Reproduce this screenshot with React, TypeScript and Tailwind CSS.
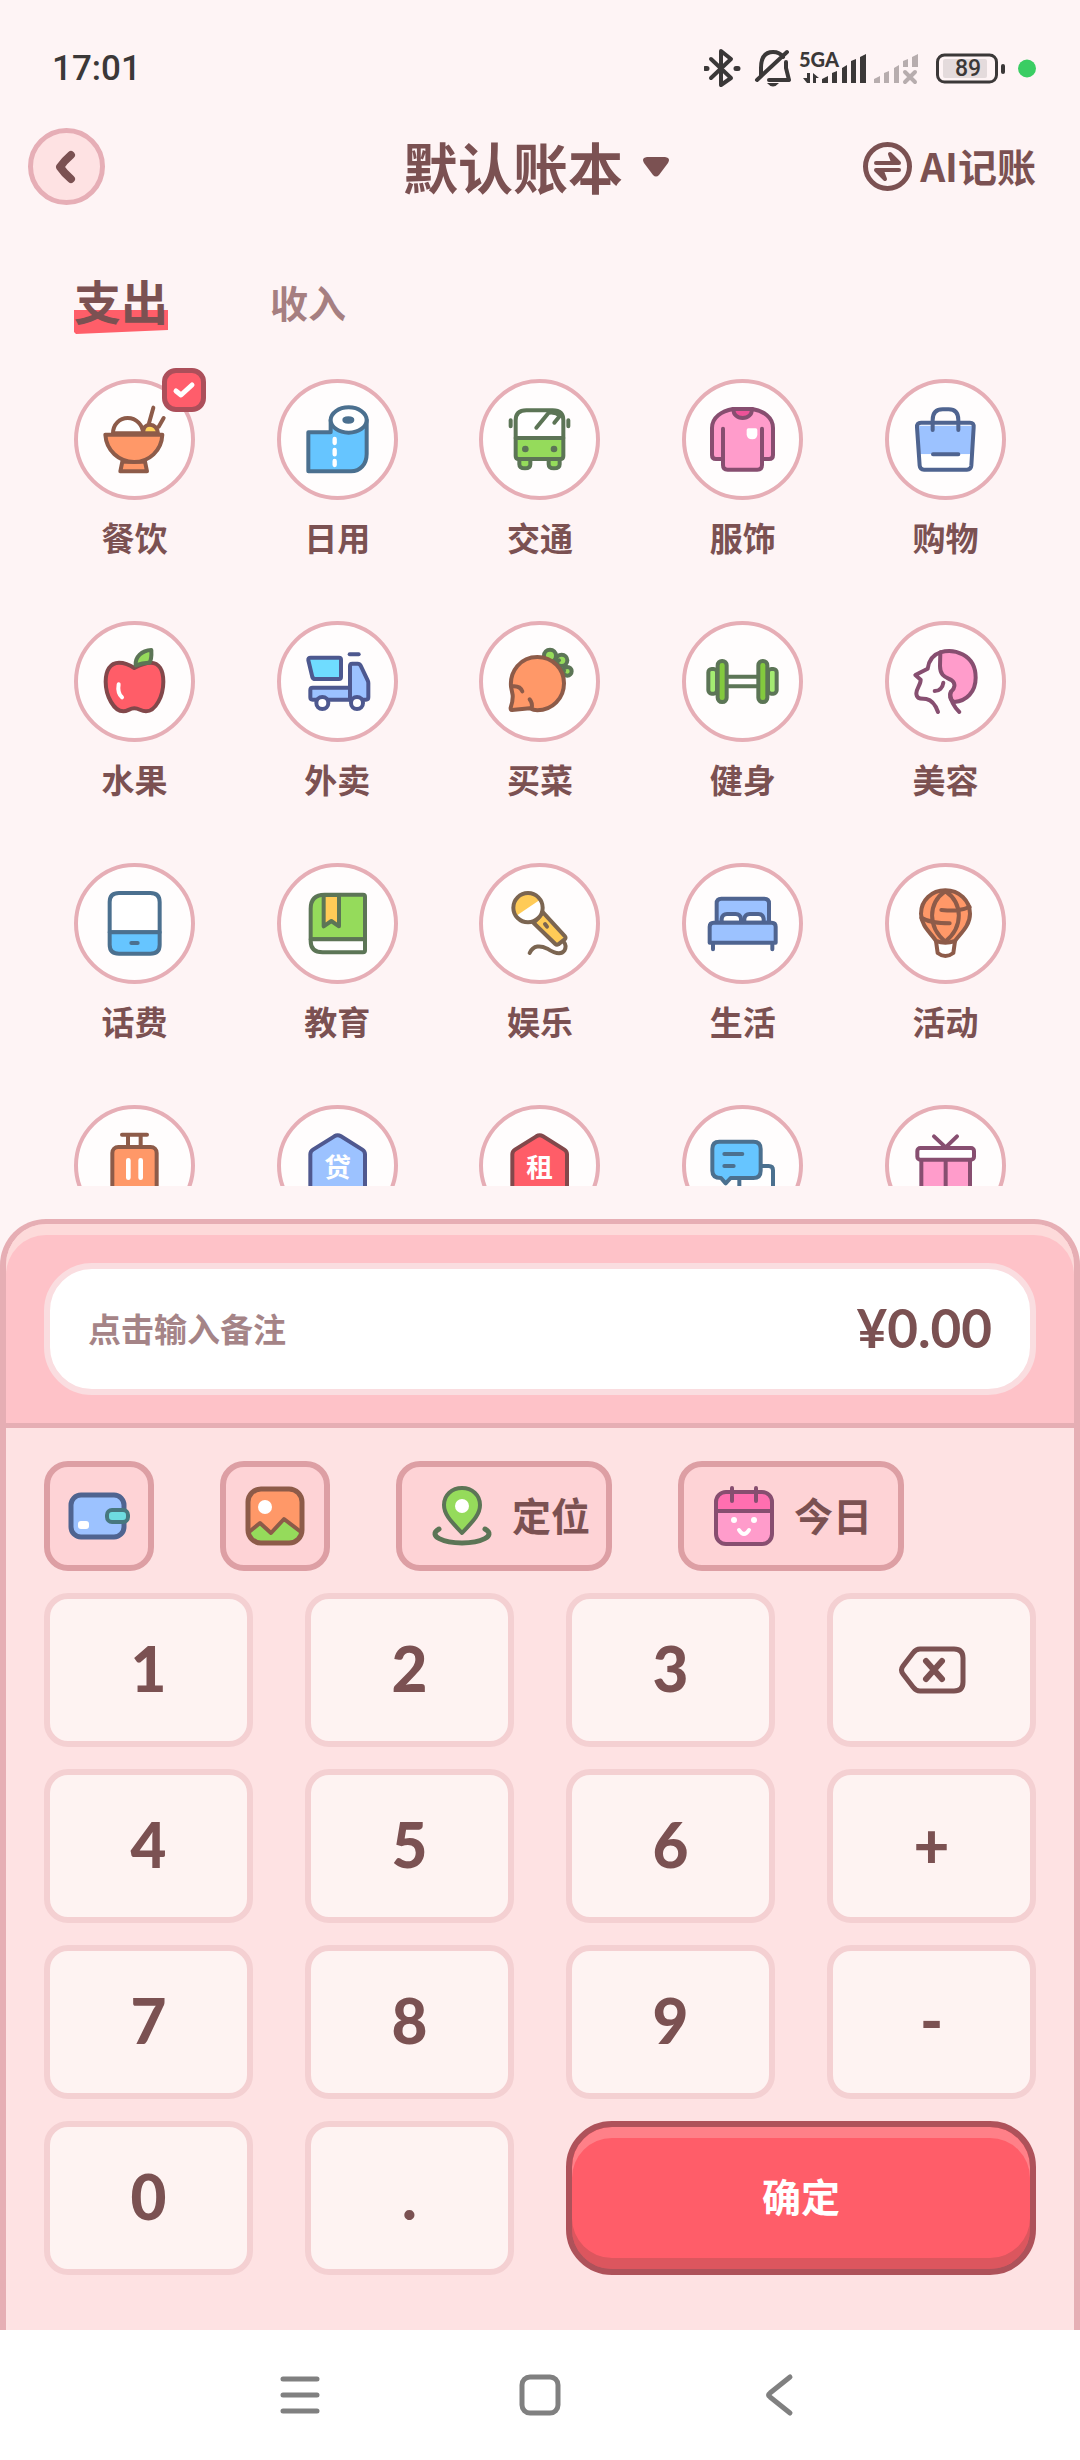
import { useState } from "react";
import type { ReactNode } from "react";

const ORANGE = "#ff9868";
const ORANGE_LINE = "#8d5b49";
const BLUE = "#9cc2ff";
const BLUE_LINE = "#4f6490";
const SKY = "#66c5ff";
const SKY_LINE = "#4b708f";
const GREEN = "#95db5b";
const GREEN_LINE = "#5c7556";
const PINK = "#ff9ccb";
const PINK_LINE = "#874e70";
const RED = "#ff5d68";
const RED_LINE = "#82484b";
const YELLOW = "#ffcb57";
const YELLOW_LINE = "#7b6551";

function Glyph({ line, children }: { line: string; children: ReactNode }) {
  return (
    <svg
      viewBox="12 12 339 339"
      className="size-full"
      fill="none"
      stroke={line}
      strokeWidth={12}
      strokeLinecap="round"
      strokeLinejoin="round"
      aria-hidden="true"
    >
      {children}
    </svg>
  );
}

const Bowl = () => (
  <Glyph line={ORANGE_LINE}>
    <path d="M208 163 C206 145 216 137 228 137 C241 137 251 148 252 163Z" fill="#ffd35c" />
    <path d="M117 163 C117 136 137 117 161 117 C187 117 207 138 207 163Z" fill="#fff" />
    <path d="M145 248 L139 277 H219 L213 248Z" fill={ORANGE} />
    <path d="M94 167 H265 C263 215 225 249 180 249 C135 249 97 215 94 167Z" fill={ORANGE} />
    <path d="M238 86 L225 133 M269 117 L254 143" />
  </Glyph>
);

const Tissue = () => (
  <Glyph line={SKY_LINE}>
    <path d="M161 123 V160 H94 V277 H222 C250 277 269 255 269 225 V123Z" fill={SKY} />
    <ellipse cx="215" cy="123" rx="54" ry="38" fill="#fff" />
    <ellipse cx="214" cy="123" rx="12" ry="5" fill={SKY_LINE} />
    <path d="M173 180 V192 M173 213 V226 M173 246 V258" stroke="#fff" strokeWidth={13} />
  </Glyph>
);

const Bus = () => (
  <Glyph line={GREEN_LINE}>
    <path d="M121 240 V256 Q121 268 138 268 Q154 268 154 256 V240Z" fill={GREEN} />
    <path d="M209 240 V256 Q209 268 225 268 Q242 268 242 256 V240Z" fill={GREEN} />
    <path d="M110 124 Q110 94 142 94 H221 Q253 94 253 124 V177 H110Z" fill="#fff" />
    <path d="M110 177 H253 V231 Q253 240 244 240 H119 Q110 240 110 231Z" fill={GREEN} />
    <path d="M209 101 L172 146 M209 101 Q230 98 243 110 L226 131" />
    <path d="M95 124 V142 M268 124 V142" />
    <circle cx="139" cy="210" r="4" fill={GREEN_LINE} />
    <circle cx="225" cy="210" r="4" fill={GREEN_LINE} />
  </Glyph>
);

const Shirt = () => (
  <Glyph line={PINK_LINE}>
    <path
      d="M153 90 H211 C245 96 273 115 273 147 V228 Q273 240 261 240 H240 V258 Q240 272 226 272 H137 Q123 272 123 258 V240 H102 Q90 240 90 228 V147 C90 115 119 96 153 90Z"
      fill={PINK}
    />
    <path d="M154 90 H210 C210 107 198 117 182 117 C166 117 154 107 154 90Z" fill="#ee5298" />
    <path d="M123 149 V240 M240 149 V240" />
    <path d="M199 148 H221 Q226 148 226 153 V166 Q226 181 211 181 Q194 181 194 166 V153 Q194 148 199 148Z" fill="#fff" stroke="none" />
  </Glyph>
);

const Bag = () => (
  <Glyph line={BLUE_LINE}>
    <path d="M96 140 H266 L263 226 H100Z" fill={BLUE} stroke="none" />
    <path d="M100 226 H263 L260 270 H104Z" fill="#fff" stroke="none" />
    <path d="M108 131 H255 Q267 131 266 145 L259 260 Q258 272 246 272 H117 Q105 272 104 260 L96 145 Q95 131 108 131Z" />
    <path d="M143 153 V123 Q143 91 173 91 H191 Q220 91 220 123 V153 M144 226 H220" />
  </Glyph>
);

const Apple = () => (
  <Glyph line={RED_LINE}>
    <path
      d="M181 141 C165 130 150 125 135 125 C108 125 95 150 95 182 C95 225 120 271 148 271 C162 271 166 262 181 262 C196 262 200 271 216 271 C245 271 268 225 268 182 C268 148 255 125 230 125 C210 125 198 132 181 141Z"
      fill={RED}
    />
    <path d="M185 133 C183 108 203 88 232 87 C233 105 232 118 226 125 C210 124 198 128 185 133Z" fill={GREEN} stroke={GREEN_LINE} />
    <path d="M134 190 C131 207 134 220 144 229" stroke="#fff" />
  </Glyph>
);

const Truck = () => (
  <Glyph line="#4d588f">
    <path d="M101 110 H186 Q192 110 192 116 V168 Q192 174 186 174 H115 Q108 174 106 168 L94 118 Q93 110 101 110Z" fill="#6fdcff" />
    <path d="M218 100 H245" />
    <path d="M219 200 H107 Q100 200 100 207 V229 Q100 236 107 236 H219Z" fill={BLUE} />
    <path d="M219 236 V135 Q219 128 226 128 H242 Q248 128 251 134 L272 178 Q274 182 274 186 V229 Q274 236 267 236Z" fill={BLUE} />
    <circle cx="136" cy="246" r="18" fill="#fff" />
    <circle cx="240" cy="246" r="18" fill="#fff" />
  </Glyph>
);

const Turnip = () => (
  <Glyph line={ORANGE_LINE}>
    <g fill={GREEN} stroke={GREEN_LINE}>
      <circle cx="213" cy="104" r="18" />
      <circle cx="248" cy="118" r="17" />
      <circle cx="265" cy="151" r="13" />
      <path d="M220 135 L240 118 M240 140 L255 150" />
    </g>
    <path
      d="M96 197 C92 150 125 108 175 108 C222 108 255 145 255 187 C255 232 220 268 175 268 C165 268 158 265 152 262 L99 267 Q94 267 95 260 C100 245 102 235 101 222Z"
      fill={ORANGE}
    />
    <path d="M98 196 C115 194 126 200 130 211 M152 235 C158 242 160 252 158 262" />
  </Glyph>
);

const Dumbbell = () => (
  <Glyph line={GREEN_LINE}>
    <path d="M140 167 H228 M140 196 H228" />
    <rect x="79" y="144" width="26" height="74" rx="10" fill="#a4eb72" />
    <rect x="258" y="144" width="26" height="74" rx="10" fill="#a4eb72" />
    <rect x="107" y="120" width="27" height="123" rx="13" fill="#83c93e" />
    <rect x="229" y="120" width="27" height="123" rx="13" fill="#83c93e" />
  </Glyph>
);

const Face = () => (
  <Glyph line={PINK_LINE}>
    <path
      d="M166 94 C205 82 272 98 272 170 C272 213 244 240 208 243 C194 236 192 222 198 212 C211 200 212 188 200 178 C182 168 165 165 165 135Z"
      fill={PINK}
    />
    <path d="M166 94 C140 102 131 122 128 143 L91 162 L107 176 C108 190 94 203 94 217 C94 236 110 232 124 234 C144 238 153 256 159 273" />
    <path d="M197 213 C193 236 210 261 223 273 M175 185 C173 200 163 210 149 210" />
  </Glyph>
);

const Phone = () => (
  <Glyph line={SKY_LINE}>
    <path d="M107 208 V117 Q107 90 135 90 H229 Q257 90 257 117 V208Z" fill="#fff" />
    <path d="M107 208 H257 V245 Q257 272 229 272 H135 Q107 272 107 245Z" fill={SKY} />
    <path d="M172 240 H191" />
  </Glyph>
);

const Book = () => (
  <Glyph line={GREEN_LINE}>
    <path d="M101 229 V137 Q101 95 143 95 H258 Q264 95 264 101 V229Z" fill={GREEN} />
    <path d="M101 229 H264 V262 Q264 268 258 268 H137 Q101 268 101 234Z" fill="#fff" />
    <path d="M140 96 H186 V190 L163 174 L140 190Z" fill={YELLOW} />
  </Glyph>
);

const Mic = () => (
  <Glyph line={YELLOW_LINE}>
    <path d="M164 180 L192 148 L258 220 Q261 224 258 228 L238 244 Q233 247 229 243Z" fill={YELLOW} />
    <circle cx="147" cy="134" r="44" fill="#fff" stroke="none" />
    <path d="M110 160 A44 44 0 1 1 183 110Z" fill={YELLOW} stroke="none" />
    <circle cx="147" cy="134" r="44" />
    <path d="M198 183 L204 191 M152 270 C163 246 185 247 205 257 C228 272 246 277 256 263 Q264 249 255 238" />
  </Glyph>
);

const Bed = () => (
  <Glyph line={BLUE_LINE}>
    <path d="M104 179 V121 Q104 107 118 107 H247 Q261 107 261 121 V179Z" fill={BLUE} />
    <path d="M119 179 V168 Q121 153 135 153 H161 Q175 153 177 168 V179Z" fill="#fff" />
    <path d="M187 179 V168 Q189 153 203 153 H229 Q243 153 245 168 V179Z" fill="#fff" />
    <path d="M83 239 V191 Q83 179 95 179 H269 Q281 179 281 191 V239Z" fill={BLUE} />
    <path d="M93 243 V259 M271 243 V259" />
  </Glyph>
);

const Balloon = () => (
  <Glyph line={ORANGE_LINE}>
    <path d="M153 234 L158 270 Q181 288 205 270 L210 234Z" fill="#fff" />
    <path d="M181 82 C140 82 108 112 108 152 C108 190 140 212 153 234 Q181 244 210 234 C225 212 255 190 255 152 C255 112 222 82 181 82Z" fill={ORANGE} />
    <path d="M181 84 C128 122 128 192 181 236 C235 192 235 122 181 84Z" />
    <path d="M254 132 C225 145 200 144 169 141 M109 164 C135 179 160 181 194 181" />
  </Glyph>
);

const Luggage = () => (
  <Glyph line={ORANGE_LINE}>
    <path d="M144 89 H219 M162 89 V126 M200 89 V126" />
    <rect x="115" y="126" width="133" height="150" rx="18" fill={ORANGE} />
    <path d="M163 166 V218 M200 166 V218" stroke="#fff" strokeWidth={14} />
  </Glyph>
);

function House({ fill, line, char }: { fill: string; line: string; char: string }) {
  return (
    <Glyph line={line}>
      <path d="M172 94 Q182 88 192 94 L256 134 Q264 139 264 148 V276 H100 V148 Q100 139 108 134Z" fill={fill} />
      <text
        x="182"
        y="216"
        textAnchor="middle"
        fontSize="80"
        fill="#fff"
        stroke="none"
        className="font-['Noto_Sans_CJK_SC',sans-serif] font-bold"
      >
        {char}
      </text>
    </Glyph>
  );
}

const Chat = () => (
  <Glyph line={SKY_LINE}>
    <path d="M172 290 V190 Q172 183 180 183 H260 Q273 183 273 196 V290Z" fill="#fff" />
    <path d="M112 110 H214 Q236 110 236 132 V197 Q236 219 214 219 H146 L131 235 L117 219 Q91 219 91 197 V132 Q91 110 112 110Z" fill={SKY} />
    <path d="M127 147 H181 M127 183 H155" />
  </Glyph>
);

const Gift = () => (
  <Glyph line={PINK_LINE}>
    <rect x="109" y="160" width="146" height="120" fill={PINK} />
    <path d="M182 163 V280" />
    <rect x="97" y="129" width="170" height="35" rx="9" fill="#fff" />
    <path d="M147 94 L182 127 L216 94" />
  </Glyph>
);

const categories: { name: string; icon: ReactNode }[] = [
  { name: "餐饮", icon: <Bowl /> },
  { name: "日用", icon: <Tissue /> },
  { name: "交通", icon: <Bus /> },
  { name: "服饰", icon: <Shirt /> },
  { name: "购物", icon: <Bag /> },
  { name: "水果", icon: <Apple /> },
  { name: "外卖", icon: <Truck /> },
  { name: "买菜", icon: <Turnip /> },
  { name: "健身", icon: <Dumbbell /> },
  { name: "美容", icon: <Face /> },
  { name: "话费", icon: <Phone /> },
  { name: "教育", icon: <Book /> },
  { name: "娱乐", icon: <Mic /> },
  { name: "生活", icon: <Bed /> },
  { name: "活动", icon: <Balloon /> },
  { name: "", icon: <Luggage /> },
  { name: "", icon: <House fill={BLUE} line="#4f588f" char="贷" /> },
  { name: "", icon: <House fill={RED} line={RED_LINE} char="租" /> },
  { name: "", icon: <Chat /> },
  { name: "", icon: <Gift /> },
];

function StatusBar() {
  return (
    <div className="flex h-14 items-center justify-between pr-11 pl-[52px] text-[#3b3838]">
      <span className="pt-0.5 font-['Roboto',sans-serif] text-[35px] leading-[54px] font-medium">17:01</span>
      <svg viewBox="0 0 332 40" className="h-10 w-[332px]" fill="none" stroke="currentColor" strokeLinecap="round" strokeLinejoin="round" aria-label="信号与电量">
        <g strokeWidth={4}>
          <path d="M7 11 L27 30 L17 37 V3 L27 11 L7 30" />
          <path d="M1 20.5 h2 M32 20.5 h2" strokeWidth={5} />
          <path d="M57 28 V20 C57 8 62 4 69 4 C74 4 77 6 79 9 M82 14 V20 L85 32 H65 M83 4 L53 32" />
        </g>
        <path d="M63 35 H75 Q69 42 63 35Z" fill="currentColor" stroke="none" />
        <text x="95" y="19" fontSize="20" fill="currentColor" stroke="none" className="font-['Lato',sans-serif] font-black">
          5GA
        </text>
        <g fill="currentColor" stroke="none">
          <path d="M103 25 h3 v10 h-3 l-4 -5 h4z M109 25 l6 5 h-3 v5 h-3z" />
          <path d="M118 35 v-4 l6 -3 v7z M128 35 v-10 l5 -2 v12z M138 35 v-15 l5 -3 v18z M147 35 v-22 l5 -2 v24z M156 35 v-26 l6 -3 v29z" />
        </g>
        <g fill="#b7adae" stroke="none">
          <path d="M170 35 v-4 l6 -3 v7z M180 35 v-10 l5 -2 v12z M190 35 v-15 l5 -3 v18z M199 19 v-6 l5 -2 v8z M208 19 v-10 l6 -3 v13z" />
        </g>
        <path d="M201 24 l10 10 m0 -10 l-10 10" stroke="#b7adae" strokeWidth={4} />
        <rect x="233.5" y="7" width="59" height="27" rx="7" strokeWidth={3} />
        <rect x="239" y="11" width="44" height="19" rx="2" fill="#e4dbdc" stroke="none" />
        <rect x="297" y="16" width="4" height="10" rx="2" fill="currentColor" stroke="none" />
        <text x="264" y="28" fontSize="23" textAnchor="middle" fill="currentColor" stroke="none" className="font-['Roboto',sans-serif] font-medium">
          89
        </text>
        <circle cx="323" cy="20.5" r="9" fill="#3acd63" stroke="none" />
      </svg>
    </div>
  );
}

function Header() {
  return (
    <header className="mt-8 grid grid-cols-[1fr_auto_1fr] items-center pr-11 pl-7">
      <button type="button" aria-label="返回" className="flex size-[77px] items-center justify-center rounded-full border-5 border-[#e6aeb6] bg-[#fee2e3]">
        <svg viewBox="0 0 24 34" className="h-[34px] w-6" fill="none" stroke="#7b5152" strokeWidth={8} strokeLinecap="round" strokeLinejoin="round" aria-hidden="true">
          <path d="M16 5 Q9 11 5 17 Q9 23 16 29" />
        </svg>
      </button>
      <button type="button" className="flex items-center gap-5 pl-2 text-[55px] leading-[72px] font-bold">
        <span className="pb-1">默认账本</span>
        <svg viewBox="0 0 26 20" className="h-5 w-[26px]" fill="#7b5152" aria-hidden="true">
          <path d="M4 0 H22 Q28 1 25 6 L16 18 Q13 21 10 18 L1 6 Q-2 1 4 0Z" />
        </svg>
      </button>
      <button type="button" className="flex items-center gap-2 justify-self-end text-[39px] leading-[72px] font-bold">
        <svg viewBox="0 0 49 49" className="size-[49px]" fill="none" stroke="#7b5152" strokeWidth={5} strokeLinecap="round" strokeLinejoin="round" aria-hidden="true">
          <circle cx="24.5" cy="24.5" r="22" />
          <path d="M13 21 H36 L27 12 Q29 17 30 20 M36 28 H13 L22 37 Q20 32 19 29" strokeWidth={4} />
        </svg>
        <span className="pb-1">AI记账</span>
      </button>
    </header>
  );
}

const keyClass =
  "flex h-[154px] items-center justify-center rounded-3xl border-6 border-[#f4d0d2] bg-[#fef3f2] font-['Lato','Noto_Sans_CJK_SC',sans-serif] text-[62px] leading-[62px] font-black";

const toolClass = "flex h-[110px] items-center rounded-3xl border-6 border-[#dd9fa4] bg-[#fed3d6] text-[39px] leading-[60px] font-bold";

function Toolbar() {
  return (
    <div className="flex gap-[66px]">
      <button type="button" aria-label="账户" className={`${toolClass} w-[110px] justify-center`}>
        <svg viewBox="0 0 64 60" className="h-[60px] w-16" fill="none" strokeWidth={5} strokeLinejoin="round" aria-hidden="true">
          <rect x="4" y="9" width="53" height="42" rx="10" fill={BLUE} stroke={BLUE_LINE} />
          <rect x="40" y="24" width="21" height="12" rx="5" fill="#6edce0" stroke="#47787f" strokeWidth={4} />
          <rect x="11" y="35" width="11" height="8" rx="3" fill="#fff" />
        </svg>
      </button>
      <button type="button" aria-label="图片" className={`${toolClass} w-[110px] justify-center`}>
        <svg viewBox="0 0 60 60" className="size-[60px]" strokeWidth={5} strokeLinejoin="round" aria-hidden="true">
          <rect x="3" y="3" width="54" height="54" rx="13" fill={ORANGE} />
          <path d="M4 46 L15 37 L26 47 L39 33 L56 46 Q56 57 44 57 H16 Q4 57 4 46Z" fill={GREEN} />
          <path d="M4 46 L15 37 L26 47 L39 33 L56 46" fill="none" stroke={ORANGE_LINE} strokeWidth={4} />
          <rect x="3" y="3" width="54" height="54" rx="13" fill="none" stroke={ORANGE_LINE} />
          <circle cx="20" cy="21" r="7" fill="#fff" />
        </svg>
      </button>
      <button type="button" className={`${toolClass} gap-5 pr-4 pl-[30px]`}>
        <svg viewBox="0 0 60 60" className="size-[60px]" fill="none" stroke={GREEN_LINE} strokeWidth={4} strokeLinecap="round" strokeLinejoin="round" aria-hidden="true">
          <path d="M7 43 C-5 50 12 57 30 57 C48 57 65 50 53 43" strokeWidth={5} />
          <path d="M30 47 C22 38 12 30 12 19 C12 9 20 2 30 2 C40 2 48 9 48 19 C48 30 38 38 30 47Z" fill={GREEN} />
          <circle cx="30" cy="20" r="7" fill="#fff" stroke="none" />
        </svg>
        <span className="pb-1">定位</span>
      </button>
      <button type="button" className={`${toolClass} gap-5 pr-[26px] pl-[30px]`}>
        <svg viewBox="0 0 60 60" className="size-[60px]" fill="none" strokeWidth={4} strokeLinecap="round" strokeLinejoin="round" aria-hidden="true">
          <rect x="2" y="6" width="56" height="52" rx="10" fill={PINK} />
          <path d="M2 25 V16 Q2 6 12 6 H48 Q58 6 58 16 V25Z" fill="#ff6fb0" />
          <path d="M2 25 H58 M18 2 V15 M42 2 V15" stroke={PINK_LINE} />
          <rect x="2" y="6" width="56" height="52" rx="10" stroke={PINK_LINE} />
          <circle cx="20" cy="34" r="3" fill="#fff" />
          <circle cx="40" cy="34" r="3" fill="#fff" />
          <path d="M25 44 Q30 52 35 44" stroke="#fff" />
        </svg>
        <span className="pb-1">今日</span>
      </button>
    </div>
  );
}

function Key({ label }: { label: string }) {
  return (
    <button type="button" className={keyClass}>
      <span className="pb-1">{label}</span>
    </button>
  );
}

export default function App() {
  const [selected, setSelected] = useState(0);
  const [note, setNote] = useState("");

  return (
    <div className="flex h-screen flex-col bg-[#fef4f5] pt-10 font-['Noto_Sans_CJK_SC',sans-serif] text-[#7b5152]">
      <StatusBar />
      <Header />

      <div className="mt-[61px] flex gap-[102px] pl-[74px]">
        <button type="button" className="relative isolate pb-1 text-[47px] leading-[68px] font-bold">
          支出
          <svg viewBox="0 0 94 24" preserveAspectRatio="none" className="absolute bottom-1 left-0 -z-10 h-6 w-full" fill="#ff5e69" aria-hidden="true">
            <path d="M0 0 H94 V20 L2 24 L0 22Z" />
          </svg>
        </button>
        <button type="button" className="text-[38px] leading-[72px] font-bold text-[#a67f81]">
          收入
        </button>
      </div>

      <main className="mt-[7px] grid min-h-0 flex-1 grid-cols-5 content-start gap-y-[59px] overflow-hidden px-[33px] pt-[34px]">
        {categories.map((c, i) => (
          <button key={i} type="button" onClick={() => setSelected(i)} className="flex flex-col items-center gap-3">
            <span className="relative block size-[121px] rounded-full border-4 border-[#e6aeb6] bg-[#fffdfd]">
              {c.icon}
              {selected === i && (
                <span className="absolute -top-[15px] -right-[15px] flex size-11 items-center justify-center rounded-[14px] border-5 border-[#ac4f5a] bg-[#ff5d6b]">
                  <svg viewBox="0 0 24 20" className="h-5 w-6" fill="none" stroke="#fff" strokeWidth={5} strokeLinecap="round" strokeLinejoin="round" aria-hidden="true">
                    <path d="M4 11 L9 15 L20 5" />
                  </svg>
                </span>
              )}
            </span>
            <span className="h-[50px] text-[33px] leading-[50px] font-bold">{c.name}</span>
          </button>
        ))}
      </main>

      <section className="mt-[33px] overflow-hidden rounded-t-[46px] border-x-6 border-t-5 border-[#e6aeb4] bg-[#fee2e3]">
        <div className="rounded-t-[40px] border-b-5 border-[#e6aeb4] bg-[#fec2c8] px-[38px] pt-[39px] pb-7 shadow-[inset_0_11px_0_#fddada]">
          <div className="flex h-[132px] items-center gap-6 rounded-[48px] border-6 border-[#fadde0] bg-white px-[38px] pb-0.5">
            <input
              aria-label="备注"
              value={note}
              onChange={(e) => setNote(e.target.value)}
              placeholder="点击输入备注"
              className="min-w-0 flex-1 bg-transparent text-[33px] leading-[48px] font-bold outline-none placeholder:text-[#a58487]"
            />
            <output className="font-['Lato',sans-serif] text-[53px] leading-[60px] font-bold">¥0.00</output>
          </div>
        </div>

        <div className="px-[38px] pt-[33px] pb-[55px]">
          <Toolbar />
          <div className="mt-[22px] grid grid-cols-4 gap-x-[52px] gap-y-[22px]">
            <Key label="1" />
            <Key label="2" />
            <Key label="3" />
            <button type="button" aria-label="删除" className={keyClass}>
              <svg viewBox="0 0 68 50" className="h-[50px] w-[68px]" fill="none" stroke="#7b5152" strokeWidth={5} strokeLinecap="round" strokeLinejoin="round" aria-hidden="true">
                <path d="M22 4 H56 Q65 4 65 13 V37 Q65 46 56 46 H22 Q18 46 15 42 L5 29 Q2 25 5 21 L15 8 Q18 4 22 4Z" />
                <path d="M28 16 L44 34 M44 16 L28 34" strokeWidth={6} />
              </svg>
            </button>
            <Key label="4" />
            <Key label="5" />
            <Key label="6" />
            <Key label="+" />
            <Key label="7" />
            <Key label="8" />
            <Key label="9" />
            <Key label="-" />
            <Key label="0" />
            <Key label="." />
            <button
              type="button"
              className="col-span-2 h-[154px] rounded-[46px] border-6 border-[#ae525a] bg-[#ff5d69] pb-1.5 text-[39px] leading-[60px] font-bold text-white shadow-[inset_0_11px_0_#ff8088,inset_0_-11px_0_#dc565e]"
            >
              确定
            </button>
          </div>
        </div>
      </section>

      <nav className="grid h-[130px] shrink-0 grid-cols-3 items-center bg-white px-[180px] text-[#808080]">
        <button type="button" aria-label="最近任务" className="flex justify-center">
          <svg viewBox="0 0 44 44" className="size-11" fill="none" stroke="currentColor" strokeWidth={5} strokeLinecap="round" aria-hidden="true">
            <path d="M5 6 H39 M5 22 H39 M5 38 H39" />
          </svg>
        </button>
        <button type="button" aria-label="主屏幕" className="flex justify-center">
          <svg viewBox="0 0 44 44" className="size-11" fill="none" stroke="currentColor" strokeWidth={5} aria-hidden="true">
            <rect x="4" y="4" width="36" height="36" rx="8" />
          </svg>
        </button>
        <button type="button" aria-label="返回上一页" className="flex justify-center">
          <svg viewBox="0 0 44 44" className="size-11" fill="none" stroke="currentColor" strokeWidth={5} strokeLinecap="round" strokeLinejoin="round" aria-hidden="true">
            <path d="M32 4 L12 20 Q9 22 12 24 L32 40" />
          </svg>
        </button>
      </nav>
    </div>
  );
}
